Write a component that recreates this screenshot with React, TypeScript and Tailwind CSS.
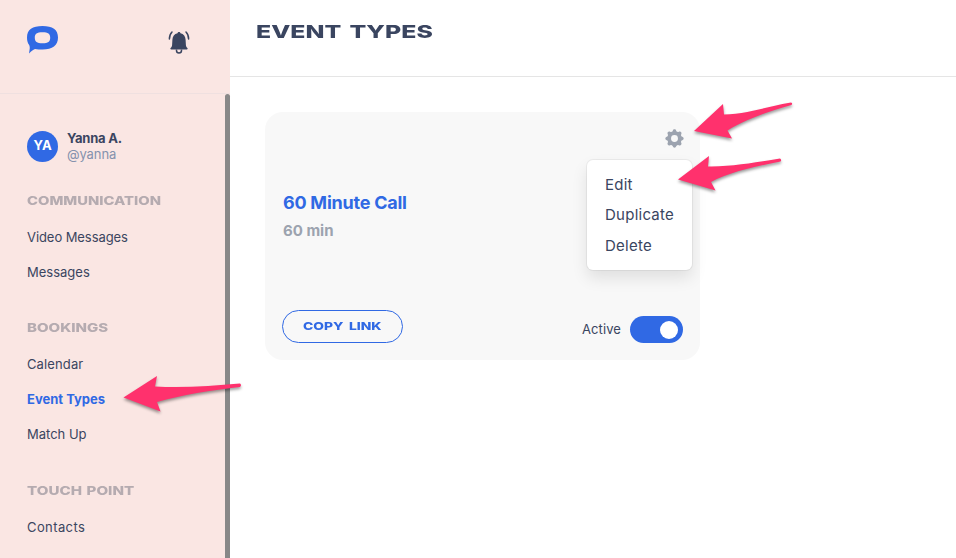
import { HiCog } from 'react-icons/hi';

const NAV_SECTIONS = [
  {
    title: 'Communication',
    titleClass: 'scale-x-[1.23]',
    items: [
      { label: 'Video Messages', spacing: 'tracking-[-0.07px]' },
      { label: 'Messages', spacing: 'tracking-normal' },
    ],
  },
  {
    title: 'Bookings',
    titleClass: 'scale-x-[1.25]',
    items: [
      { label: 'Calendar', spacing: 'tracking-[0.12px]' },
      { label: 'Event Types', spacing: 'tracking-normal' },
      { label: 'Match Up', spacing: 'tracking-normal' },
    ],
  },
  {
    title: 'Touch Point',
    titleClass: 'scale-x-[1.26] [word-spacing:1px]',
    items: [{ label: 'Contacts', spacing: 'tracking-[0.4px]' }],
  },
];

const MENU_ITEMS = ['Edit', 'Duplicate', 'Delete'];

function Logo() {
  return (
    <svg width="31" height="28" viewBox="0 0 31 28" className="text-[#3069e4]">
      <path
        fill="currentColor"
        fillRule="evenodd"
        d="M15.500 0C5.500 0 0 3.500 0 11.500c0 3.600.8 5.500 2 7.300.8 1.300.9 3.200.6 4.700L2 27.500c2-2.300 4-4 6-4.600 2.300.500 4.800.600 7.500.600 10 0 15.500-4 15.500-11.900C31 3.500 25.500 0 15.500 0Zm0 6.300c5.700 0 7.700 1.500 7.700 5.400s-2 5.500-7.700 5.500-7.700-1.600-7.700-5.500 2-5.400 7.700-5.400Z"
      />
    </svg>
  );
}

function Bell() {
  return (
    <svg width="22" height="24" viewBox="0 0 22 24" className="text-[#3a4560]">
      <path
        fill="currentColor"
        d="M11 2c.8 0 1.300.500 1.500 1.200 3.200.7 5 3.200 5.100 6.500l.3 5.300c.1 1.500.7 2.300 1.500 3.100.5.600.2 1.400-.6 1.400H3.200c-.8 0-1.100-.8-.6-1.400.8-.8 1.400-1.600 1.500-3.100l.3-5.300c.1-3.300 1.900-5.800 5.100-6.500C9.700 2.500 10.200 2 11 2Z"
      />
      <path fill="none" stroke="currentColor" strokeWidth="1.500" d="M8.500 19.500v1a2.500 2.500 0 0 0 5 0v-1" />
      <path
        fill="none"
        stroke="currentColor"
        strokeWidth="1.500"
        strokeLinecap="round"
        d="M4 2C2.200 3.800 1.400 6 1.400 9M18 2c1.800 1.800 2.600 4 2.600 7"
      />
    </svg>
  );
}

function Sidebar() {
  return (
    <aside className="w-[230px] h-full shrink-0 flex flex-col bg-[#fae6e3]">
      <div className="h-[94px] shrink-0 flex items-start justify-between pl-[27px] pr-10 border-b border-[#efe0e0]">
        <div className="pt-[26px]">
          <Logo />
        </div>
        <div className="pt-[30px]">
          <Bell />
        </div>
      </div>
      <div className="flex-1 flex min-h-0">
        <div className="flex-1 overflow-hidden pl-[27px] pt-[37px]">
          <div className="flex items-center gap-[9px] h-[30px]">
            <div className="size-[31px] rounded-full bg-[#3069e4] text-white text-[13px] font-bold flex items-center justify-center">
              YA
            </div>
            <div className="leading-4">
              <div className="text-[13px] font-bold tracking-[-0.2px]">Yanna A.</div>
              <div className="text-[13px] text-[#8592ad] tracking-[-0.1px]">@yanna</div>
            </div>
          </div>
          <nav className="mt-[29.6px]">
            {NAV_SECTIONS.map((section) => (
              <div key={section.title} className="mb-[28.5px]">
                <h2
                  className={`h-5 mb-[9px] text-[12px] leading-5 font-extrabold uppercase text-[#b5abb0] origin-left w-max ${section.titleClass}`}
                >
                  {section.title}
                </h2>
                {section.items.map(({ label, spacing }) => (
                  <a
                    key={label}
                    className={`block h-[35px] leading-[35px] text-[13px] ${spacing} ${label === 'Event Types' ? 'text-[#3069e4] font-bold' : ''}`}
                  >
                    {label}
                  </a>
                ))}
              </div>
            ))}
          </nav>
        </div>
        <div className="w-[5px] rounded-t-full bg-[#888888]" />
      </div>
    </aside>
  );
}

function EventCard() {
  return (
    <div className="relative w-[435px] h-[248px] rounded-[18px] bg-[#f8f8f8] flex flex-col pl-[17px] pr-[17px] pt-[15px] pb-[17px]">
      <HiCog className="self-end size-[23px] -mr-[2.5px] text-[#9ca3af]" />
      <h3 className="mt-[41px] ml-px text-[18px] leading-6 font-bold text-[#3069e4] tracking-[-0.24px]">60 Minute Call</h3>
      <p className="mt-[6px] ml-px text-[15px] leading-5 font-bold text-[#9ca3af]">60 min</p>
      <div className="mt-auto flex items-end justify-between">
        <button className="w-[121px] h-[33px] rounded-full border border-[#3069e4] text-[#3069e4] text-[11px] font-extrabold flex items-center justify-center">
          <span className="scale-x-[1.26] whitespace-nowrap [word-spacing:2px]">COPY LINK</span>
        </button>
        <div className="flex items-center gap-[9px]">
          <span className="text-[13px] tracking-[0.1px]">Active</span>
          <div className="w-[53px] h-[27px] rounded-full bg-[#3069e4] flex items-center justify-end pr-[5px]">
            <div className="size-[18px] rounded-full bg-white" />
          </div>
        </div>
      </div>

      {/* settings menu */}
      <div className="absolute right-2 top-12 w-[105px] h-[110px] rounded-md bg-white pl-[18px] pt-[10px] shadow-[0_0_0_1px_rgba(0,0,0,0.05),0_8px_16px_rgba(0,0,0,0.1)]">
        {MENU_ITEMS.map((item) => (
          <div key={item} className="h-[30.3px] leading-[30.6px] text-[15px] tracking-[0.25px]">
            {item}
          </div>
        ))}
      </div>
    </div>
  );
}

function Arrows() {
  return (
    <svg
      width="956"
      height="558"
      viewBox="0 0 956 558"
      className="absolute inset-0 pointer-events-none text-[#ff316d] drop-shadow-[0_2px_1.500px_rgba(0,0,0,0.4)]"
    >
      <g fill="currentColor">
        <path d="M694 131 723 104 724 114.500C747 114 770 106 791 102.500Q793 103 791.500 105C770 111 744 120 727.500 130.500L732 138.500Z" />
        <path d="M678 179.500 709 156 708 166.500C733 167 757 162 780 158.500Q782 160 780.500 161.500C757 166 730 172 711 182L715.500 190.500Z" />
        <path d="M123.500 397.500 157 376 155 386.500C184 388 212 386 240 383.500Q242 385 240 387C212 390 181 395 157 402L160.500 411.500Z" />
      </g>
    </svg>
  );
}

export default function App() {
  return (
    <div className="relative w-[956px] h-[558px] overflow-hidden flex bg-white text-[#3a4560] font-['Inter','Liberation_Sans',sans-serif]">
      <Sidebar />
      <main className="flex-1 flex flex-col">
        <header className="h-[77px] border-b border-[#e5e5e5] pl-[26px] pt-[18px]">
          <h1 className="w-max text-[18px] leading-7 font-extrabold origin-left scale-x-[1.38] [word-spacing:2px]">
            EVENT TYPES
          </h1>
        </header>
        <div className="pl-[35px] pt-[35px]">
          <EventCard />
        </div>
      </main>
      <Arrows />
    </div>
  );
}
